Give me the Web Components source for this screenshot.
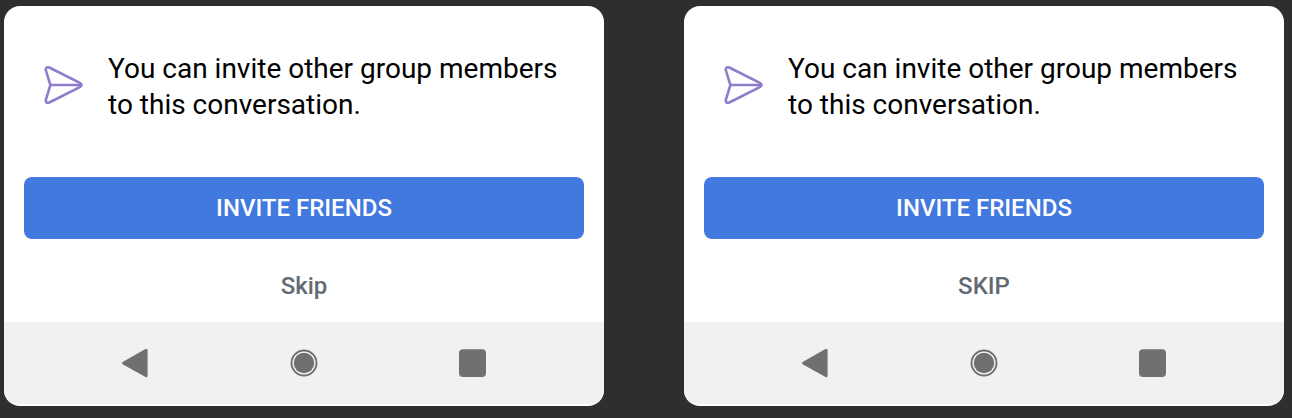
<!DOCTYPE html>
<html lang="en">
<head>
<meta charset="utf-8">
<meta name="viewport" content="width=device-width, initial-scale=1">
<title>Invite friends</title>
<style>
  body { margin: 0; min-height: 100vh; background: #2e2e2e; font-family: Roboto, "Liberation Sans", sans-serif; }
</style>
</head>
<body>
<card-row>
  <invite-card>
    You can invite other group members to this conversation.
    <action-button slot="actions" kind="primary">INVITE FRIENDS</action-button>
    <action-button slot="actions" kind="quiet">Skip</action-button>
  </invite-card>
  <invite-card>
    You can invite other group members to this conversation.
    <action-button slot="actions" kind="primary">INVITE FRIENDS</action-button>
    <action-button slot="actions" kind="quiet">SKIP</action-button>
  </invite-card>
</card-row>

<script>
class BaseElement extends HTMLElement {
  constructor() {
    super();
    this.attachShadow({ mode: "open" }).innerHTML = this.constructor.markup;
  }
}

customElements.define("card-row", class extends BaseElement {
  static markup = `
    <style>
      :host { display: grid; grid-template-columns: 1fr 1fr; gap: 80px; padding: 6px 8px 12px 4px; }
    </style>
    <slot></slot>`;
});

customElements.define("send-icon", class extends BaseElement {
  static markup = `
    <style>
      :host { display: block; flex: none; width: 40px; height: 40px; padding-bottom: 4px; }
      svg { display: block; width: 100%; height: 100%; }
    </style>
    <svg viewBox="0 0 40 40" fill="none" stroke="#8f7ccb" stroke-width="2.6" stroke-linecap="round" stroke-linejoin="round" aria-hidden="true">
      <path d="M5.300 2.500 L36.300 18.200 Q38.800 20 36.300 21.800 L5.300 37.500 Q1.400 38.500 1.800 34.900 L6.400 20 L1.800 5.100 Q1.400 1.500 5.300 2.500 Z"/>
      <path d="M6.400 20 H37"/>
    </svg>`;
});

customElements.define("action-button", class extends BaseElement {
  static markup = `
    <style>
      :host { display: block; }
      button {
        display: block; box-sizing: border-box; width: 100%; margin: 0; padding: 16px;
        border: 0; border-radius: 8px; background: none; color: #636a73;
        font: 500 24px/30px Roboto, "Liberation Sans", sans-serif; text-align: center; cursor: pointer;
      }
      :host([kind="primary"]) button { background: #4279df; color: #fff; }
    </style>
    <button type="button"><slot></slot></button>`;
});

customElements.define("system-nav", class extends BaseElement {
  static markup = `
    <style>
      :host { display: block; background: #f1f1f1; }
      nav { display: grid; grid-template-columns: repeat(3, 1fr); justify-items: center; width: 84%; margin: 0 auto; padding: 26px 0; }
      button { display: block; margin: 0; padding: 0; border: 0; background: none; cursor: pointer; }
      svg { display: block; width: 30px; height: 30px; fill: #707070; }
    </style>
    <nav aria-label="System">
      <button type="button" aria-label="Back"><svg viewBox="0 0 30 30"><path d="M1.600 14 L24.500 .900 Q26.600 .200 26.600 2.400 V27.600 Q26.600 29.800 24.500 29.100 L1.600 16.200 Q0 15 1.600 14 Z"/></svg></button>
      <button type="button" aria-label="Home"><svg viewBox="0 0 30 30"><circle cx="15" cy="15" r="12.500" fill="none" stroke="#707070" stroke-width="1.900"/><circle cx="15" cy="15" r="10.200"/></svg></button>
      <button type="button" aria-label="Overview"><svg viewBox="0 0 30 30"><rect x="2" y="1.300" width="27" height="27.600" rx="4"/></svg></button>
    </nav>`;
});

customElements.define("invite-card", class extends BaseElement {
  static markup = `
    <style>
      :host { display: block; overflow: hidden; padding-bottom: 2px; border-radius: 16px; background: #fff; }
      .message { display: flex; align-items: center; gap: 24px; padding: 45px 40px 54px; }
      p { margin: 0; color: #000; font-size: 28px; line-height: 36px; }
      .actions { display: grid; gap: 16px; padding: 0 20px 5px; }
    </style>
    <section>
      <div class="message"><send-icon></send-icon><p><slot></slot></p></div>
      <div class="actions"><slot name="actions"></slot></div>
      <system-nav></system-nav>
    </section>`;
});
</script>
</body>
</html>
